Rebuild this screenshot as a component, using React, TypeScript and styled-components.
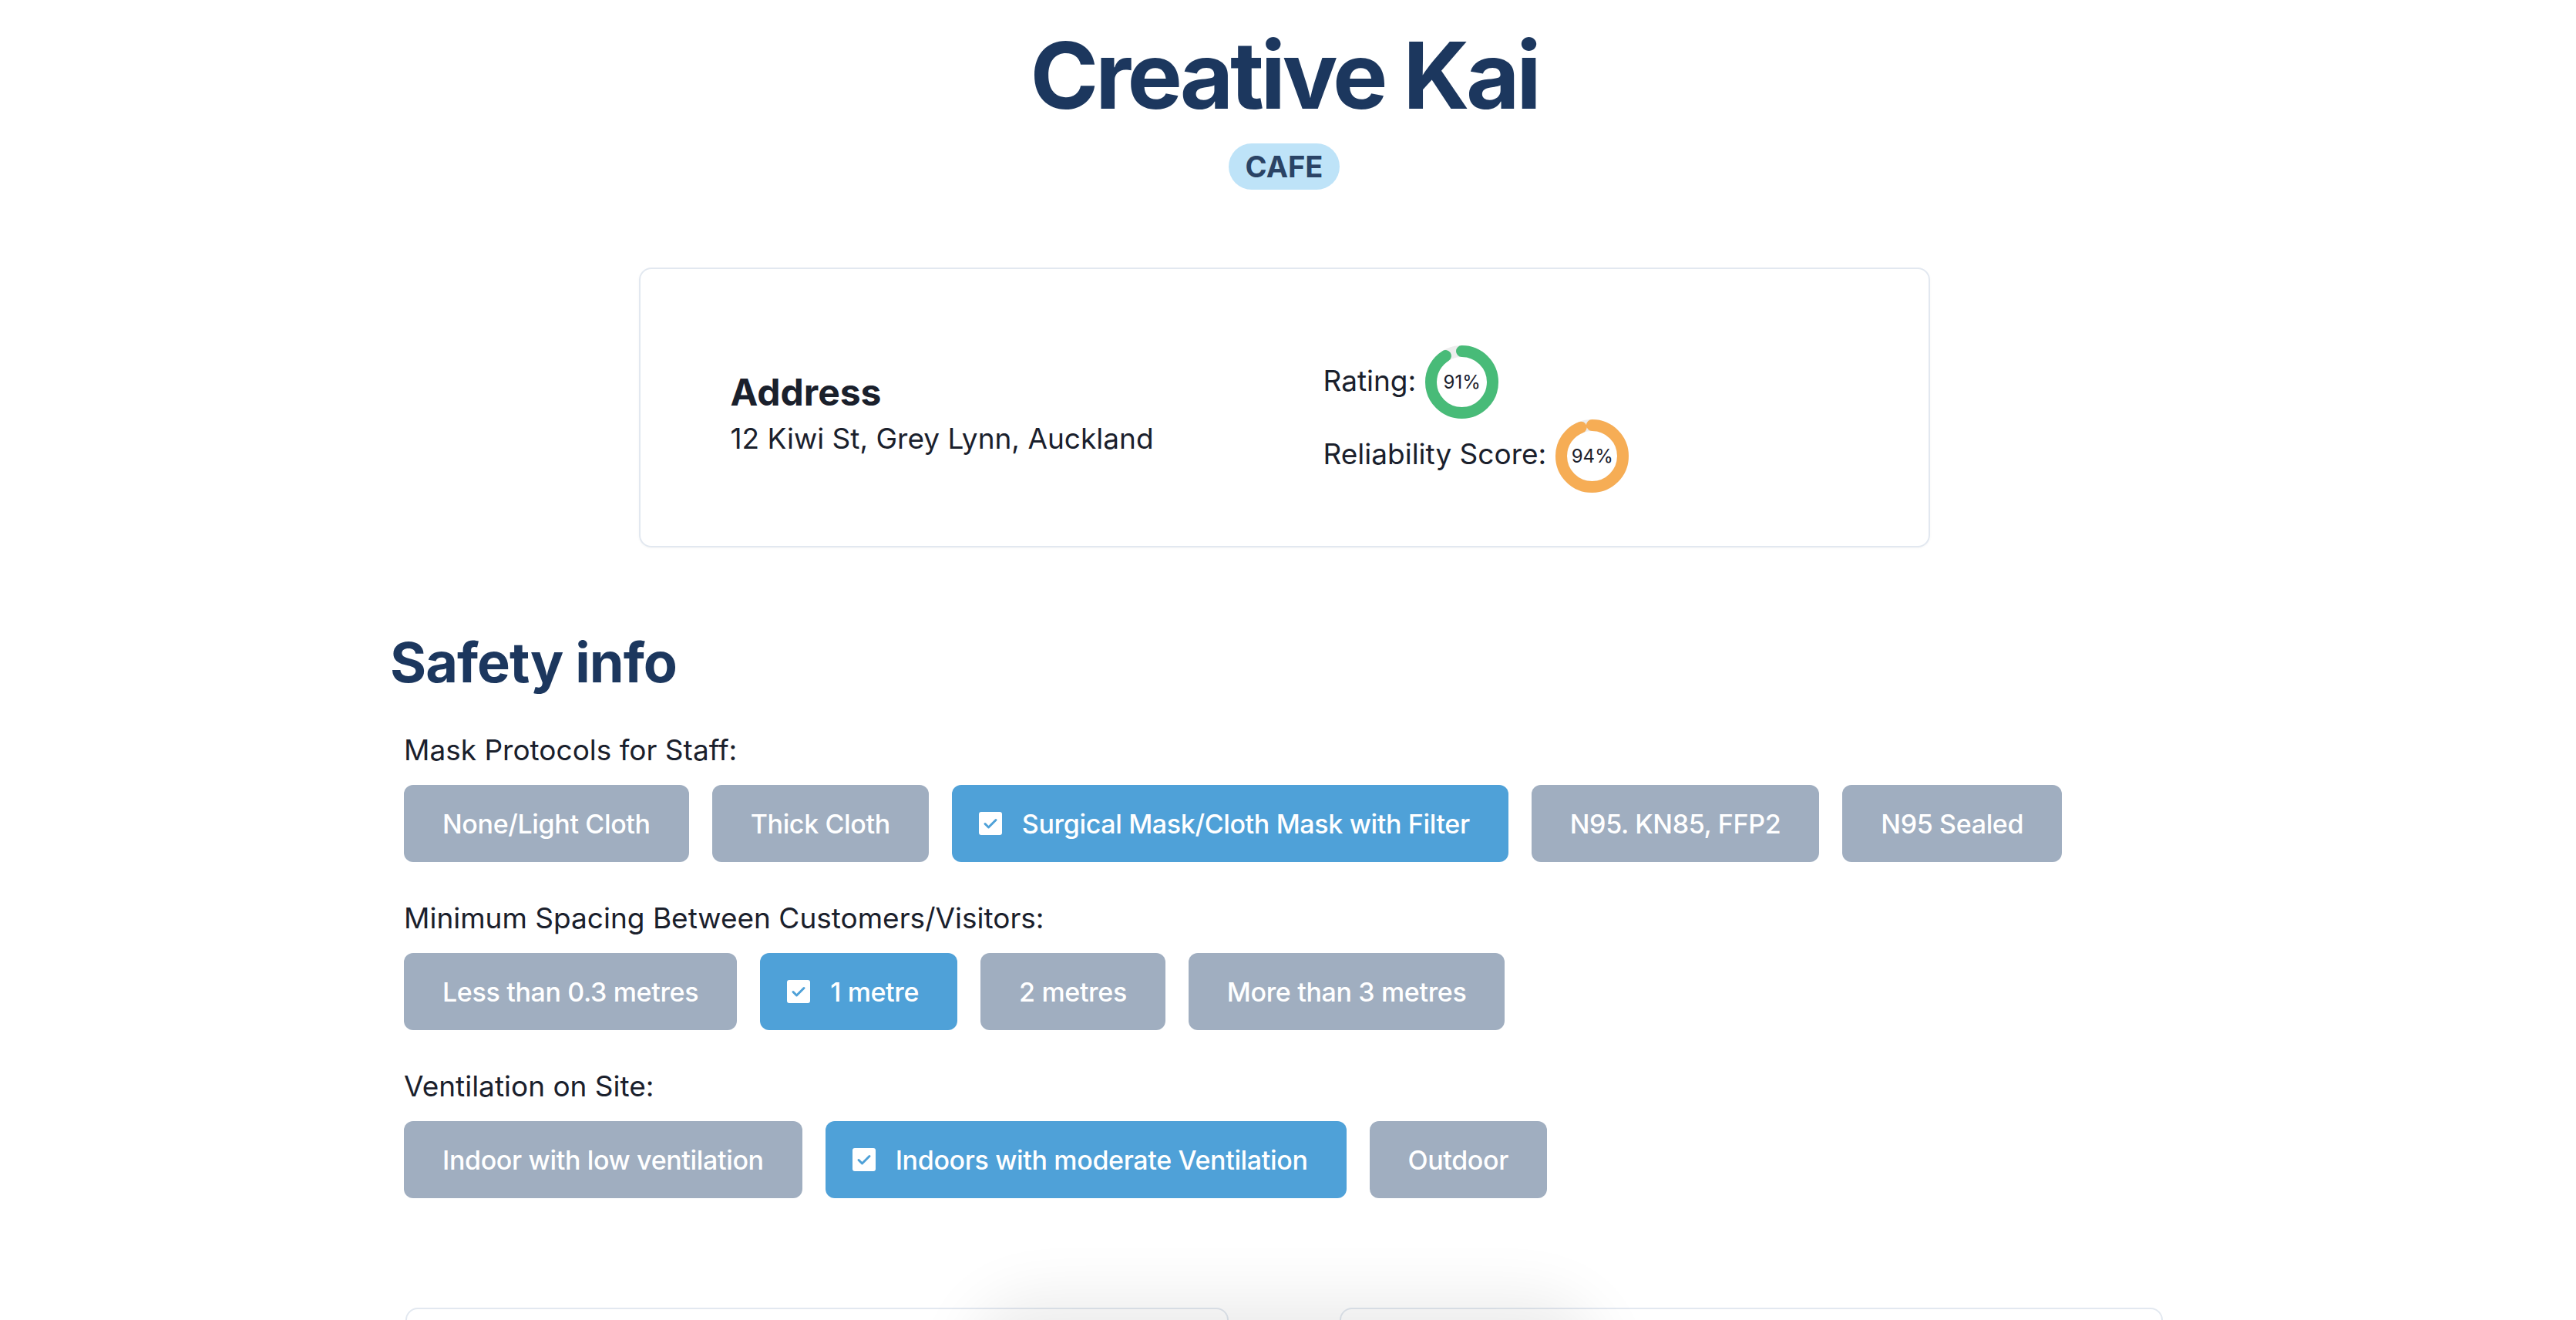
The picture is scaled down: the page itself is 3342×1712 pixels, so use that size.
import React from "react";
import styled, { createGlobalStyle } from "styled-components";

const GlobalStyle = createGlobalStyle`
  html, body {
    margin: 0;
    padding: 0;
    overflow: hidden;
    background: #ffffff;
  }
  body {
    font-family: Inter, "Noto Sans", "Liberation Sans", sans-serif;
    color: #1a202c;
  }
  * { box-sizing: border-box; }
`;

const Page = styled.div`
  display: flex;
  flex-direction: column;
  align-items: center;
  padding: 26px 10px 0 0;
`;

const Title = styled.h1`
  margin: 0;
  font-size: 120px;
  line-height: 144px;
  font-weight: 700;
  letter-spacing: -4.4px;
  color: #1c375e;
`;

const Badge = styled.span`
  margin-top: 16px;
  height: 60px;
  padding: 0 22px;
  border-radius: 30px;
  background: #bee3f8;
  color: #2a4365;
  font-size: 38px;
  font-weight: 700;
  display: inline-flex;
  align-items: center;
`;

const InfoCard = styled.section`
  margin-top: 101px;
  width: 1675px;
  height: 363px;
  border: 2px solid #e2e8f0;
  border-radius: 16px;
  box-shadow: 0 1px 3px rgba(0, 0, 0, 0.04);
  display: grid;
  grid-template-columns: 769px 1fr;
  align-items: center;
  padding: 99px 0 69px 117px;
`;

const AddressBlock = styled.div`
  margin-bottom: 11px;
`;

const AddressTitle = styled.h3`
  margin: 0;
  font-size: 48px;
  line-height: 58px;
  font-weight: 700;
  color: #1a202c;
`;

const AddressText = styled.p`
  margin: 4px 0 0;
  font-size: 37px;
  line-height: 54px;
  color: #1a202c;
`;

const Ratings = styled.div`
  display: flex;
  flex-direction: column;
`;

const RatingRow = styled.div`
  display: flex;
  align-items: center;
  height: 95.5px;
  gap: 12px;
`;

const RatingLabel = styled.span`
  font-size: 37px;
  line-height: 54px;
  color: #1a202c;
  margin-top: -4px;
`;

const RingWrap = styled.div`
  display: grid;
  width: 95px;
  height: 95px;
  & > * {
    grid-area: 1 / 1;
  }
`;

const RingText = styled.span`
  align-self: center;
  justify-self: center;
  font-size: 24px;
  color: #1a202c;
`;

const Ring: React.FC<{ value: number; color: string }> = ({ value, color }) => {
  const r = 40;
  const c = 2 * Math.PI * r;
  return (
    <RingWrap>
      <svg width="95" height="95" viewBox="0 0 95 95">
        <circle cx="47.5" cy="47.5" r={r} fill="none" stroke="#ededed" strokeWidth="15" />
        <circle
          cx="47.5"
          cy="47.5"
          r={r}
          fill="none"
          stroke={color}
          strokeWidth="15"
          strokeLinecap="round"
          strokeDasharray={`${(value / 100) * c} ${c}`}
          transform="rotate(-90 47.5 47.5)"
        />
      </svg>
      <RingText>{value}%</RingText>
    </RingWrap>
  );
};

const Section = styled.section`
  width: 2320px;
  margin-top: 106px;
`;

const SectionTitle = styled.h2`
  margin: 0;
  font-size: 72px;
  line-height: 86px;
  font-weight: 700;
  letter-spacing: -1px;
  color: #1c375e;
`;

const Groups = styled.div`
  padding-left: 18px;
  margin-top: 44px;
  display: flex;
  flex-direction: column;
  gap: 46px;
`;

const Group = styled.div`
  display: flex;
  flex-direction: column;
  gap: 18px;
`;

const GroupLabel = styled.div`
  font-size: 37px;
  line-height: 54px;
  color: #1a202c;
`;

const OptionRow = styled.div`
  display: flex;
  gap: 30px;
`;

const Option = styled.button<{ $selected?: boolean }>`
  height: 100px;
  border: none;
  border-radius: 12px;
  padding: 0 50px 0 ${(p) => (p.$selected ? "35px" : "50px")};
  background: ${(p) => (p.$selected ? "#4fa1d8" : "#a0aec0")};
  color: #ffffff;
  font-family: inherit;
  font-size: 34px;
  font-weight: 500;
  letter-spacing: -0.35px;
  display: inline-flex;
  align-items: center;
  gap: 26px;
  white-space: nowrap;
  cursor: pointer;
`;

const CheckBox = styled.span`
  width: 30px;
  height: 30px;
  border-radius: 3px;
  background: #ffffff;
  display: inline-flex;
  align-items: center;
  justify-content: center;
`;

const Check = () => (
  <CheckBox>
    <svg width="30" height="30" viewBox="0 0 30 30">
      <path
        d="M8 15.5 L12.5 20 L22 10.5"
        fill="none"
        stroke="#4fa1d8"
        strokeWidth="3"
        strokeLinecap="round"
        strokeLinejoin="round"
      />
    </svg>
  </CheckBox>
);

const BottomCards = styled.div`
  margin-top: 142px;
  padding-left: 20px;
  display: grid;
  grid-template-columns: 1068px 1068px;
  column-gap: 144px;
`;

const BottomCard = styled.div`
  height: 300px;
  border: 2px solid #e2e8f0;
  border-radius: 16px;
  background: #ffffff;
`;

const FloatingShadow = styled.div`
  position: fixed;
  left: calc(50% - 5px);
  transform: translateX(-50%);
  bottom: -130px;
  width: 760px;
  height: 120px;
  border-radius: 60px;
  background: #ffffff;
  box-shadow: 0 -10px 80px 30px rgba(0, 0, 0, 0.08);
`;

type GroupData = { label: string; options: string[]; selected: number };

const groups: GroupData[] = [
  {
    label: "Mask Protocols for Staff:",
    options: [
      "None/Light Cloth",
      "Thick Cloth",
      "Surgical Mask/Cloth Mask with Filter",
      "N95. KN85, FFP2",
      "N95 Sealed",
    ],
    selected: 2,
  },
  {
    label: "Minimum Spacing Between Customers/Visitors:",
    options: ["Less than 0.3 metres", "1 metre", "2 metres", "More than 3 metres"],
    selected: 1,
  },
  {
    label: "Ventilation on Site:",
    options: [
      "Indoor with low ventilation",
      "Indoors with moderate Ventilation",
      "Outdoor",
    ],
    selected: 1,
  },
];

export default function App() {
  return (
    <>
      <GlobalStyle />
      <Page>
        <Title>Creative Kai</Title>
        <Badge>CAFE</Badge>
        <InfoCard>
          <AddressBlock>
            <AddressTitle>Address</AddressTitle>
            <AddressText>12 Kiwi St, Grey Lynn, Auckland</AddressText>
          </AddressBlock>
          <Ratings>
            <RatingRow>
              <RatingLabel>Rating:</RatingLabel>
              <Ring value={91} color="#48bb78" />
            </RatingRow>
            <RatingRow>
              <RatingLabel>Reliability Score:</RatingLabel>
              <Ring value={94} color="#f6ad55" />
            </RatingRow>
          </Ratings>
        </InfoCard>
        <Section>
          <SectionTitle>Safety info</SectionTitle>
          <Groups>
            {groups.map((g) => (
              <Group key={g.label}>
                <GroupLabel>{g.label}</GroupLabel>
                <OptionRow>
                  {g.options.map((o, i) => (
                    <Option key={o} $selected={i === g.selected}>
                      {i === g.selected && <Check />}
                      {o}
                    </Option>
                  ))}
                </OptionRow>
              </Group>
            ))}
          </Groups>
          <BottomCards>
            <BottomCard />
            <BottomCard />
          </BottomCards>
        </Section>
      </Page>
      <FloatingShadow />
    </>
  );
}
